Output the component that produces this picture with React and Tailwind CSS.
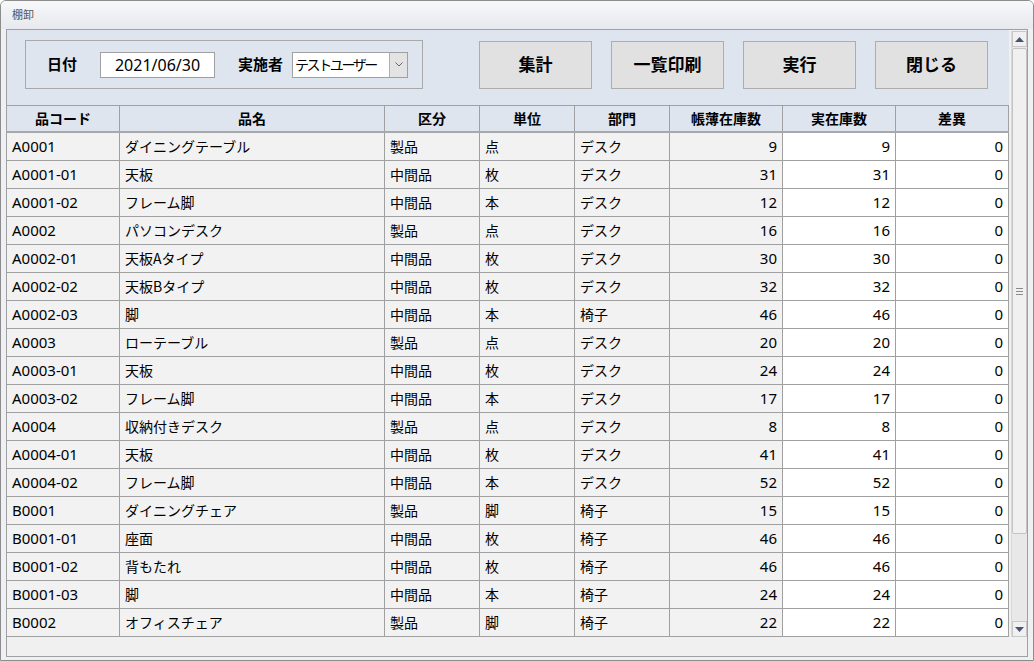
import React from "react";

const rows = [
  ["A0001", "ダイニングテーブル", "製品", "点", "デスク", 9, 9, 0],
  ["A0001-01", "天板", "中間品", "枚", "デスク", 31, 31, 0],
  ["A0001-02", "フレーム脚", "中間品", "本", "デスク", 12, 12, 0],
  ["A0002", "パソコンデスク", "製品", "点", "デスク", 16, 16, 0],
  ["A0002-01", "天板Aタイプ", "中間品", "枚", "デスク", 30, 30, 0],
  ["A0002-02", "天板Bタイプ", "中間品", "枚", "デスク", 32, 32, 0],
  ["A0002-03", "脚", "中間品", "本", "椅子", 46, 46, 0],
  ["A0003", "ローテーブル", "製品", "点", "デスク", 20, 20, 0],
  ["A0003-01", "天板", "中間品", "枚", "デスク", 24, 24, 0],
  ["A0003-02", "フレーム脚", "中間品", "本", "デスク", 17, 17, 0],
  ["A0004", "収納付きデスク", "製品", "点", "デスク", 8, 8, 0],
  ["A0004-01", "天板", "中間品", "枚", "デスク", 41, 41, 0],
  ["A0004-02", "フレーム脚", "中間品", "本", "デスク", 52, 52, 0],
  ["B0001", "ダイニングチェア", "製品", "脚", "椅子", 15, 15, 0],
  ["B0001-01", "座面", "中間品", "枚", "椅子", 46, 46, 0],
  ["B0001-02", "背もたれ", "中間品", "枚", "椅子", 46, 46, 0],
  ["B0001-03", "脚", "中間品", "本", "椅子", 24, 24, 0],
  ["B0002", "オフィスチェア", "製品", "脚", "椅子", 22, 22, 0],
];

const headers = ["品コード", "品名", "区分", "単位", "部門", "帳薄在庫数", "実在庫数", "差異"];
const widths = ["w-[113px]", "w-[265px]", "w-[95px]", "w-[95px]", "w-[95px]", "w-[113px]", "w-[113px]", "w-[113px]"];

function Btn({ children }) {
  return (
    <div className="w-[113px] h-[48px] bg-[#e1e1e1] border border-[#adadad] flex items-center justify-center text-[17px] font-bold text-black">
      {children}
    </div>
  );
}

export default function App() {
  return (
    <div
      className="w-[1034px] h-[661px] bg-[#eef0f4] border border-[#8c8c8c] rounded-t-[6px] flex flex-col overflow-hidden text-black"
      style={{ fontFamily: '"Noto Sans", "Noto Sans CJK JP", sans-serif' }}
    >
      <div className="h-[28px] shrink-0 bg-gradient-to-b from-[#f7f8fa] to-[#e7e9ee] pl-[11px] pt-[7px] text-[11px] leading-[14px] text-[#555]">
        棚卸
      </div>
      <div className="ml-[5px] mr-[5px] mb-[3px] flex-1 border border-[#a0a0a0] bg-[#f0f0f0] flex min-h-0">
        <div className="w-[1002px] flex flex-col">
          <div className="h-[75px] shrink-0 bg-[#dfe5ee] flex items-start pt-[10px]">
            <div className="ml-[18px] w-[398px] h-[49px] border border-[#a9a9a9] flex items-center">
              <span className="ml-[21px] text-[15px] font-bold w-[53px]">日付</span>
              <div className="w-[115px] h-[26px] bg-white border border-[#a0a0a0] flex items-center justify-center text-[16px]">
                2021/06/30
              </div>
              <span className="ml-[23px] text-[15px] font-bold w-[54px]">実施者</span>
              <div className="w-[116px] h-[26px] bg-white border border-[#a0a0a0] flex items-center justify-between">
                <span className="pl-[2px] text-[14px] leading-none whitespace-nowrap tracking-[-2.4px]">
                  テストユーザー
                </span>
                <div className="w-[18px] h-full shrink-0 bg-[#e3e3e3] border-l border-[#b0b0b0] flex items-center justify-center">
                  <svg width="8" height="5" viewBox="0 0 8 5">
                    <path d="M0.5 0.5 L4 4 L7.5 0.5" fill="none" stroke="#666" strokeWidth="1" />
                  </svg>
                </div>
              </div>
            </div>
            <div className="ml-[56px] flex gap-[19px] mt-[1px]">
              <Btn>集計</Btn>
              <Btn>一覧印刷</Btn>
              <Btn>実行</Btn>
              <Btn>閉じる</Btn>
            </div>
          </div>
          <div className="flex h-[28px] shrink-0 bg-[#dfe5ee] border-t border-[#a0a0a0] border-b-2 border-b-[#a8a8a8]">
            {headers.map((h, i) => (
              <div
                key={h}
                className={`${widths[i]} shrink-0 border-r border-[#a0a0a0] flex items-center justify-center text-[14px] font-bold`}
              >
                {h}
              </div>
            ))}
          </div>
          {rows.map((r, ri) => (
            <div key={ri} className="flex h-[28px] shrink-0 border-b border-[#a0a0a0]">
              {r.map((c, ci) => {
                const num = ci >= 5;
                const white = ci >= 6;
                const latin = ci === 0 || num;
                return (
                  <div
                    key={ci}
                    className={`${widths[ci]} shrink-0 border-r border-[#a0a0a0] flex items-center ${
                      latin ? "text-[15px]" : "text-[14px] font-['Noto_Sans_CJK_JP',sans-serif]"
                    } ${white ? "bg-white" : "bg-[#f2f2f2]"} ${num ? "justify-end pr-[5px]" : "pl-[5px]"}`}
                  >
                    {c}
                  </div>
                );
              })}
            </div>
          ))}
          <div className="flex-1" />
        </div>
        <div className="w-[17px] ml-[2px] mb-[19px] mt-[1px] bg-[#e8e8e8] border-l border-[#d8d8d8] flex flex-col">
          <div className="h-[16px] border border-[#c8c8c8] bg-[#f0f0f0] flex items-center justify-center">
            <svg width="9" height="5" viewBox="0 0 9 5">
              <path d="M0 5 L4.5 0 L9 5 Z" fill="#4a5270" />
            </svg>
          </div>
          <div className="h-[486px] mt-[1px] bg-[#f0f0f0] border border-[#c4c4c4] rounded-[2px] flex items-center justify-center">
            <div className="flex flex-col gap-[2px]">
              <div className="w-[7px] h-px bg-[#8a8a8a]" />
              <div className="w-[7px] h-px bg-[#8a8a8a]" />
              <div className="w-[7px] h-px bg-[#8a8a8a]" />
            </div>
          </div>
          <div className="flex-1" />
          <div className="h-[16px] border border-[#c8c8c8] bg-[#f0f0f0] flex items-center justify-center">
            <svg width="9" height="5" viewBox="0 0 9 5">
              <path d="M0 0 L4.5 5 L9 0 Z" fill="#4a5270" />
            </svg>
          </div>
        </div>
      </div>
    </div>
  );
}
